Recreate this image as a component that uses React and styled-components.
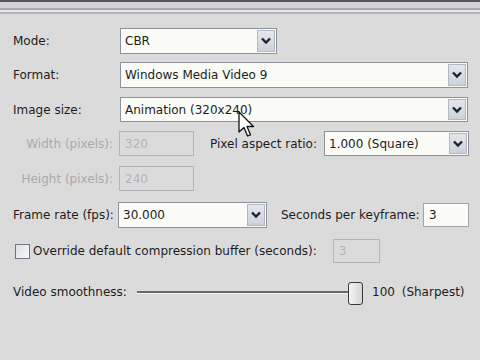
import React from 'react';
import styled, { createGlobalStyle } from 'styled-components';

const GlobalStyle = createGlobalStyle`
  html, body {
    margin: 0;
    padding: 0;
    background: #dcdbdc;
  }
  body {
    font-family: "DejaVu Sans", Verdana, sans-serif;
    font-size: 12px;
    color: #1c1c1c;
  }
`;

const Window = styled.div`
  position: relative;
  width: 480px;
  height: 360px;
  overflow: hidden;
  background: #dcdbdc;
`;

const TopEdge = styled.div`
  height: 6px;
  border-top: 2px solid #555659;
  background: #d4d4d6;
  border-bottom: 2px solid #a8a8aa;
  box-shadow: 0 2px 0 #e8e8ea, 0 4px 0 #b4b4b6;
`;

const Form = styled.div`
  padding: 18px 12px 0 13px;
  display: flex;
  flex-direction: column;
`;

const Row = styled.div`
  display: flex;
  align-items: center;
  height: ${(p) => p.$h || 26}px;
  margin-top: ${(p) => p.$gap || 0}px;
`;

const Label = styled.span`
  width: ${(p) => p.$w || 107}px;
  flex: none;
  white-space: nowrap;
  text-align: ${(p) => (p.$right ? 'right' : 'left')};
  padding-right: ${(p) => (p.$right ? 6 : 0)}px;
  box-sizing: border-box;
  color: ${(p) => (p.$disabled ? '#a9a9ab' : '#1c1c1c')};
  margin-left: ${(p) => p.$ml || 0}px;
`;

const SelectBox = styled.div`
  width: ${(p) => p.$w}px;
  height: 100%;
  flex: none;
  box-sizing: border-box;
  border: 1px solid #8d929a;
  background: #fbfcf7;
  display: flex;
  align-items: center;
  padding: 1px;
  margin-left: ${(p) => p.$ml || 0}px;
`;

const SelectText = styled.span`
  flex: 1;
  padding-left: 3px;
  white-space: nowrap;
  overflow: hidden;
`;

const DropButton = styled.div`
  width: 18px;
  height: 100%;
  box-sizing: border-box;
  border: 1px solid #b2b8c4;
  background: linear-gradient(#e4e6ec, #cdd1da);
  display: flex;
  align-items: center;
  justify-content: center;
`;

const TextBox = styled.div`
  width: ${(p) => p.$w}px;
  height: ${(p) => p.$h || 25}px;
  flex: none;
  box-sizing: border-box;
  border: 1px solid ${(p) => (p.$disabled ? '#b5b5b7' : '#a2a5aa')};
  background: ${(p) => (p.$disabled ? '#dcdbdc' : '#fbfcf7')};
  color: ${(p) => (p.$disabled ? '#b3b3b5' : '#1c1c1c')};
  display: flex;
  align-items: center;
  padding-left: 5px;
  margin-left: ${(p) => p.$ml || 0}px;
`;

const CheckBox = styled.div`
  width: 15px;
  height: 15px;
  box-sizing: border-box;
  border: 1px solid #6d7686;
  background: linear-gradient(135deg, #dfe0e3, #f7f7f7);
  margin-left: 2px;
  margin-right: 3px;
  flex: none;
`;

const CheckLabel = styled.span`
  white-space: nowrap;
`;

const Track = styled.div`
  position: relative;
  width: 218px;
  height: 2px;
  margin-left: 17px;
  background: #6a6a6c;
  border-bottom: 1px solid #f4f4f4;
`;

const Thumb = styled.div`
  position: absolute;
  right: -8px;
  top: -9px;
  width: 13px;
  height: 21px;
  border: 1px solid #3a3a3c;
  border-radius: 3px;
  background: linear-gradient(90deg, #f4f4f4, #d6d6d8);
`;

const SliderValue = styled.span`
  margin-left: 17px;
  white-space: nowrap;
  word-spacing: 3px;
`;

const Cursor = styled.svg`
  position: absolute;
  left: 238px;
  top: 111px;
`;

function Chevron() {
  return (
    <svg width="12" height="8" viewBox="0 0 12 8">
      <path d="M2 1.5 L6 5.5 L10 1.5" fill="none" stroke="#1d2230" strokeWidth="2.4" />
    </svg>
  );
}

function Select({ w, ml, children }) {
  return (
    <SelectBox $w={w} $ml={ml}>
      <SelectText>{children}</SelectText>
      <DropButton>
        <Chevron />
      </DropButton>
    </SelectBox>
  );
}

export default function App() {
  return (
    <Window>
      <GlobalStyle />
      <TopEdge />
      <Form>
        <Row>
          <Label>Mode:</Label>
          <Select w={157}>CBR</Select>
        </Row>
        <Row $gap={8}>
          <Label>Format:</Label>
          <Select w={348}>Windows Media Video 9</Select>
        </Row>
        <Row $gap={9} $h={25}>
          <Label>Image size:</Label>
          <Select w={348}>Animation (320x240)</Select>
        </Row>
        <Row $gap={9} $h={25}>
          <Label $w={106} $right $disabled>
            Width (pixels):
          </Label>
          <TextBox $w={75} $disabled>
            320
          </TextBox>
          <Label $w={114} $ml={16}>
            Pixel aspect ratio:
          </Label>
          <Select w={145}>1.000 (Square)</Select>
        </Row>
        <Row $gap={10} $h={25}>
          <Label $w={106} $right $disabled>
            Height (pixels):
          </Label>
          <TextBox $w={75} $disabled>
            240
          </TextBox>
        </Row>
        <Row $gap={11}>
          <Label $w={105}>Frame rate (fps):</Label>
          <Select w={149}>30.000</Select>
          <Label $w={142} $ml={14}>
            Seconds per keyframe:
          </Label>
          <TextBox $w={46} $h={24}>
            3
          </TextBox>
        </Row>
        <Row $gap={11} $h={24}>
          <CheckBox />
          <CheckLabel>Override default compression buffer (seconds):</CheckLabel>
          <TextBox $w={47} $h={24} $ml={16} $disabled>
            3
          </TextBox>
        </Row>
        <Row $gap={17} $h={24}>
          <Label $w={107}>Video smoothness:</Label>
          <Track>
            <Thumb />
          </Track>
          <SliderValue>100 (Sharpest)</SliderValue>
        </Row>
      </Form>
      <Cursor width="17" height="27" viewBox="0 0 17 27">
        <path
          d="M1 1 L1 21 L6 16.5 L9.5 25 L12.5 23.8 L9 15.5 L15.5 15.5 Z"
          fill="#ffffff"
          stroke="#111111"
          strokeWidth="1.3"
          strokeLinejoin="round"
        />
      </Cursor>
    </Window>
  );
}
